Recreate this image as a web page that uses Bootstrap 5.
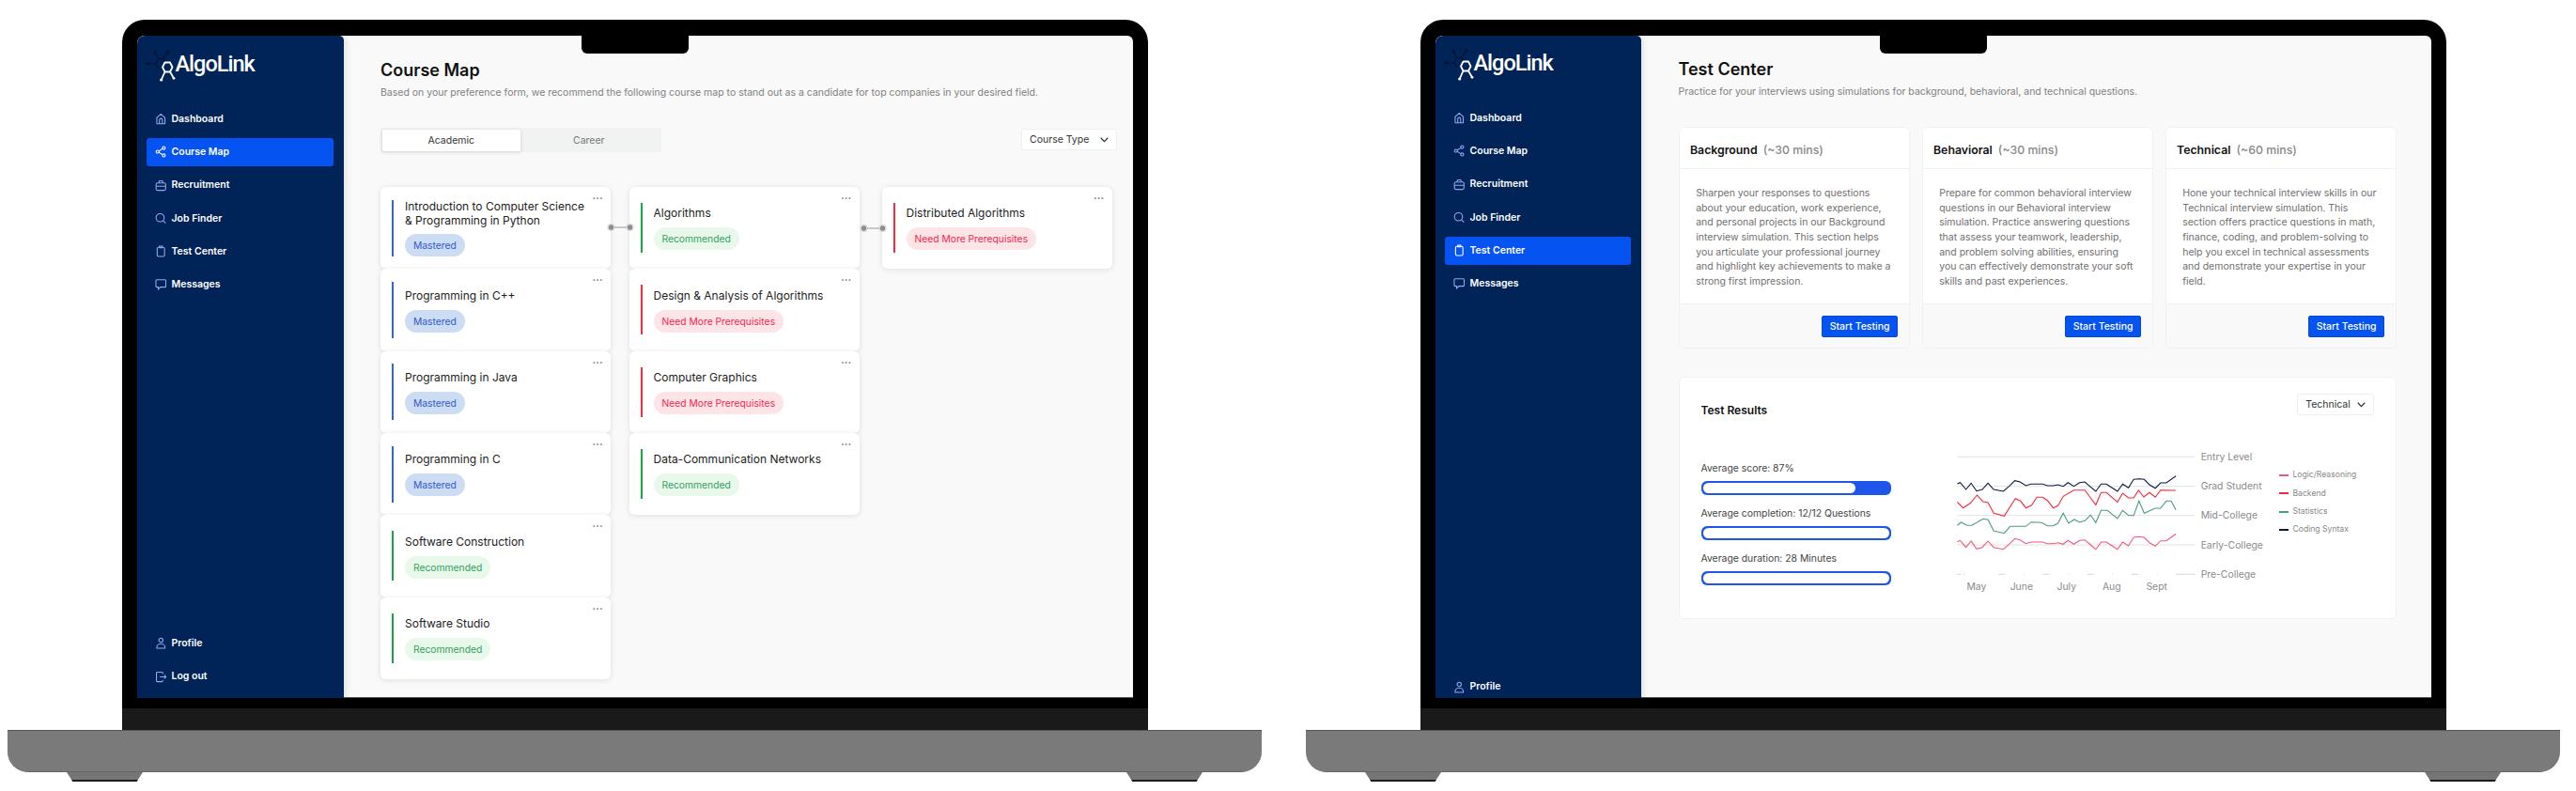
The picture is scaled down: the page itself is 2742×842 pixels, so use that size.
<!DOCTYPE html>
<html lang="en">

<head>
	<meta charset="utf-8">
	<meta name="viewport" content="width=device-width, initial-scale=1">
	<title>AlgoLink</title>
	<link href="https://cdn.jsdelivr.net/npm/bootstrap@5.3.5/dist/css/bootstrap.min.css" rel="stylesheet">
	<style>
		body { background: #fff; font-family: Inter, "Liberation Sans", sans-serif; overflow: hidden; width: 2742px; height: 842px; }
		.stage { padding: 21px 0 0 8px; gap: 47px; }
		.laptop { width: 1335px; flex: none; }
		.lid { width: 1092px; margin: 0 auto; position: relative; background: #000; border-radius: 24px 24px 0 0; padding: 17px 16px 11.5px; }
		.notch { position: absolute; left: 50%; top: 0; width: 114px; height: 36px; margin-left: -57px; background: #000; border-radius: 0 0 6px 6px; z-index: 3; }
		.chin { width: 1092px; height: 23px; margin: 0 auto; background: #1a1a1a; }
		.base { height: 45px; background: #7a7a7a; border-top: 1px solid #555; border-bottom: 1px solid #666; border-radius: 0 0 22px 22px; }
		.feet { padding: 0 63px; }
		.foot { width: 81px; height: 10px; background: #757575; border-bottom: 2px solid #1c1c1c; clip-path: polygon(0 0, 100% 0, 92% 100%, 8% 100%); }
		.screen { height: 704.5px; background: #f9f9f9; border-radius: 8px 6px 0 0; overflow: hidden; }

		.app-side { width: 220px; flex: none; background: #002358; padding: 14px 11px 7.5px 10px; border-radius: 8px 5px 0 0; box-shadow: 2px 0 6px rgba(0, 0, 0, .1); position: relative; }
		.app-side.cut { width: 219px; padding-top: 13px; padding-bottom: 0; margin-bottom: -3.5px; }
		.brand-row { height: 36px; margin-left: -1px; margin-bottom: 23.5px; color: #fff; }
		.brand-row svg { width: 34px; height: 36px; flex: none; margin-right: -2px; }
		.brand-name { font-family: Roboto, sans-serif; font-size: 23.5px; font-weight: 500; letter-spacing: -1px; margin-top: -3px; }
		.app-side .nav { gap: 5.3px; }
		.app-side .nav-link { height: 30px; padding: 0 0 0 9px; gap: 5.5px; color: #fff; font-size: 10.5px; font-weight: 600; border-radius: 3px; }
		.app-side .nav-link.active { background: #0553f0; color: #fff; }
		.app-side .nav-link svg { width: 12.5px; height: 13px; flex: none; stroke: #8fa8f0; fill: none; stroke-width: 1.4; }
		.app-side .nav-link.active svg { stroke: #fff; }

		.app-main { border-bottom: 1px solid #555; padding: 25px 16.5px 0 39.5px; min-width: 0; }
		.app-main.test { padding: 24px 37px 0 40px; }
		.page-title { font-size: 18px; line-height: 24px; font-weight: 600; color: #111; margin: 0 0 3.7px; }
		.page-sub { font-size: 10.5px; line-height: 16px; color: #808080; margin: 0; }

		.tab-track { width: 299px; height: 26.7px; margin-top: 29px; background: #f1f2f2; border-radius: 3px; padding: 2px; }
		.tab-track .nav-link { width: 146.5px; height: 23px; padding: 0; font-size: 10.5px; line-height: 23px; text-align: center; color: #777; border-radius: 2px; }
		.tab-track .nav-link.active { background: #fff; color: #333; box-shadow: 0 1px 4px rgba(0, 0, 0, .15); }
		.pick { background: #fff; border: 1px solid #efefef; border-radius: 3px; height: 23px; padding: 0 8px; font-size: 10.5px; color: #333; white-space: nowrap; }
		.pick svg { width: 9px; height: 6px; flex: none; fill: none; stroke: #333; stroke-width: 1.3; }
		.pick-type { margin: 30.7px 0 0; width: 102px; }
		.pick-level { width: 81.3px; }

		.board { margin-top: 36.5px; }
		.board-col { width: 245px; flex: none; }
		.board-col + .board-col { margin-left: 19.5px; }
		.board-col:last-child { margin-left: 24px; }
		.map-tile { height: 87.33px; padding: 0 20px 0 12px; gap: 12px; border: 0; border-radius: 6px; box-shadow: 0 1px 6px rgba(0, 0, 0, .11); }
		.map-stripe { width: 2px; height: 53px; flex: none; }
		.is-blue .map-stripe { height: 60px; background: #2f66e8; }
		.is-green .map-stripe { background: #18a544; }
		.is-red .map-stripe { background: #f22b3f; }
		.map-title { font-size: 12px; line-height: 14.3px; color: #222; padding-top: 1.5px; margin-bottom: 7.5px; }
		.map-tag { height: 24px; line-height: 24px; padding: 0 9px; border-radius: 12px; font-size: 10.3px; }
		.is-blue .map-tag { background: #cbdcf3; color: #3558c9; }
		.is-green .map-tag { background: #e8f8ea; color: #35a05f; }
		.is-red .map-tag { background: #fde4e7; color: #f5274f; }
		.map-dots { position: absolute; top: 6px; right: 8px; font-size: 11px; line-height: 13px; font-weight: 700; color: #777; letter-spacing: .2px; }
		.map-link { position: absolute; left: 100%; top: 38px; margin-left: -4px; width: 30px; height: 10px; z-index: 2; }
		.map-link.far { margin-left: 0; top: 38.7px; }

		.test-row { gap: 13px; margin-top: 29.7px; }
		.test-card { width: 246px; height: 235.7px; border-color: #f1f1f1; border-radius: 6px; }
		.test-card .card-header { height: 43.5px; padding: 0 11.5px; background: #fff; border-color: #f0f0f0; font-size: 12.3px; line-height: 47px; font-weight: 600; color: #111; }
		.test-card .card-header span { font-weight: 500; color: #888; margin-left: 3px; }
		.test-card .card-body { padding: 18px 15.3px 0 17.7px; font-size: 10.5px; line-height: 15.65px; color: #6f6f6f; }
		.test-card .card-footer { height: 46.7px; padding: 11.3px 11.5px 0; background: #f9f9f9; border-color: #f0f0f0; }
		.go-btn { width: 80.8px; height: 23.4px; padding: 0; font-size: 10.5px; font-weight: 500; line-height: 21px; background: #0553f0; border-color: #0a46cf; border-radius: 2px; }

		.result-card { height: 258px; margin-top: 30.3px; padding: 17px 23px 0; border-color: #f1f1f1; border-radius: 6px; }
		.result-title { font-size: 12px; line-height: 16px; font-weight: 600; color: #111; margin: 10px 0 0; }
		.result-body { margin-top: 34px; }
		.bars { width: 202px; flex: none; margin: 11.7px 70.5px 0 0; }
		.bar-label { font-size: 10.4px; line-height: 16px; color: #444; margin-bottom: 5.3px; }
		.bars .progress { height: 14.7px; padding: 2px; margin-bottom: 12px; background: #1f56ea; }
		.bars .progress-bar { border-radius: 6px; }
		.chart { width: 340px; height: 160px; flex: none; }
		.chart text { font-size: 10.4px; fill: #8a8a8a; }
		.legend { margin: 20px 0 0 3px; gap: 7.3px; font-size: 8.6px; line-height: 12px; color: #888; white-space: nowrap; }
		.legend i { display: inline-block; width: 9.5px; height: 2px; vertical-align: middle; margin-right: 5px; }
	</style>
</head>

<body>
	<svg class="d-none">
		<symbol id="i-home" viewBox="0 0 16 16"><path d="M2.5 14V6.5L8 1.5l5.5 5V14a.8.8 0 0 1-.8.8H3.3a.8.8 0 0 1-.8-.8zM6 14.8V9.5a2 2 0 0 1 4 0v5.3"/></symbol>
		<symbol id="i-map" viewBox="0 0 16 16"><circle cx="3.5" cy="8" r="2"/><circle cx="12" cy="3" r="2"/><circle cx="12" cy="13" r="2"/><path d="M5.3 7l5-3M5.3 9l5 3"/></symbol>
		<symbol id="i-case" viewBox="0 0 16 16"><rect x="1.5" y="4.5" width="13" height="10" rx="2"/><path d="M5.5 4.5v-2a1 1 0 0 1 1-1h3a1 1 0 0 1 1 1v2M1.5 9h13"/></symbol>
		<symbol id="i-search" viewBox="0 0 16 16"><circle cx="7" cy="7" r="5.5"/><path d="M11 11l3.5 3.5"/></symbol>
		<symbol id="i-clip" viewBox="0 0 16 16"><rect x="3" y="2.5" width="10" height="12.5" rx="2"/><path d="M6 1h4v2H6z"/></symbol>
		<symbol id="i-chat" viewBox="0 0 16 16"><path d="M2.5 2h11a1.3 1.3 0 0 1 1.3 1.3v7.4a1.3 1.3 0 0 1-1.3 1.3H7.5l-3 3v-3h-2a1.3 1.3 0 0 1-1.3-1.3V3.3A1.3 1.3 0 0 1 2.5 2z"/></symbol>
		<symbol id="i-user" viewBox="0 0 16 16"><circle cx="8" cy="4" r="2.8"/><path d="M2.5 15v-1.5a5.5 4.5 0 0 1 11 0V15z"/></symbol>
		<symbol id="i-out" viewBox="0 0 16 16"><path d="M10.5 4V2.5a1 1 0 0 0-1-1H3a1 1 0 0 0-1 1v11a1 1 0 0 0 1 1h6.5a1 1 0 0 0 1-1V12M6.5 8H15M12.5 5.5L15 8l-2.5 2.5"/></symbol>
		<symbol id="i-down" viewBox="0 0 9 6"><path d="M.8 .8L4.5 4.6 8.2 .8"/></symbol>
	</svg>

	<div class="stage d-flex">
		<!-- course map -->
		<div class="laptop">
			<div class="lid">
				<div class="notch"></div>
				<div class="screen d-flex">
					<aside class="app-side d-flex flex-column" data-active="Course Map" data-foot="Profile,Log out"></aside>
					<main class="app-main flex-grow-1">
						<h1 class="page-title">Course Map</h1>
						<p class="page-sub">Based on your preference form, we recommend the following course map to stand out as a candidate for top companies in your desired field.</p>
						<div class="d-flex justify-content-between align-items-start">
							<ul class="nav tab-track">
								<li class="nav-item"><a class="nav-link active" href="#">Academic</a></li>
								<li class="nav-item"><a class="nav-link" href="#">Career</a></li>
							</ul>
							<button class="pick pick-type d-flex align-items-center justify-content-between" type="button">Course Type <svg><use href="#i-down"/></svg></button>
						</div>
						<div id="board" class="board d-flex align-items-start"></div>
					</main>
				</div>
			</div>
			<div class="chin"></div>
			<div class="base"></div>
			<div class="feet d-flex justify-content-between"><div class="foot"></div><div class="foot"></div></div>
		</div>

		<!-- test center -->
		<div class="laptop">
			<div class="lid">
				<div class="notch"></div>
				<div class="screen d-flex">
					<aside class="app-side cut d-flex flex-column" data-active="Test Center" data-foot="Profile"></aside>
					<main class="app-main test flex-grow-1">
						<h1 class="page-title">Test Center</h1>
						<p class="page-sub">Practice for your interviews using simulations for background, behavioral, and technical questions.</p>
						<div id="tests" class="test-row d-flex"></div>
						<div class="card result-card">
							<div class="d-flex justify-content-between align-items-start">
								<h2 class="result-title">Test Results</h2>
								<button class="pick pick-level d-flex align-items-center justify-content-between" type="button">Technical <svg><use href="#i-down"/></svg></button>
							</div>
							<div class="result-body d-flex align-items-start">
								<div class="bars">
									<div class="bar-label">Average score: 87%</div>
									<div class="progress"><div class="progress-bar bg-white" style="width: 82%"></div></div>
									<div class="bar-label">Average completion: 12/12 Questions</div>
									<div class="progress"><div class="progress-bar bg-white" style="width: 100%"></div></div>
									<div class="bar-label">Average duration: 28 Minutes</div>
									<div class="progress"><div class="progress-bar bg-white" style="width: 100%"></div></div>
								</div>
								<svg id="chart" class="chart"></svg>
								<div class="legend d-flex flex-column">
									<div><i style="background: #f4577a"></i>Logic/Reasoning</div>
									<div><i style="background: #f32a3c"></i>Backend</div>
									<div><i style="background: #4d9b82"></i>Statistics</div>
									<div><i style="background: #0b1b3f"></i>Coding Syntax</div>
								</div>
							</div>
						</div>
					</main>
				</div>
			</div>
			<div class="chin"></div>
			<div class="base"></div>
			<div class="feet d-flex justify-content-between"><div class="foot"></div><div class="foot"></div></div>
		</div>
	</div>

	<script src="https://cdn.jsdelivr.net/npm/bootstrap@5.3.5/dist/js/bootstrap.bundle.min.js"></script>
	<script>
		const navIcons = {
			'Dashboard': 'home', 'Course Map': 'map', 'Recruitment': 'case', 'Job Finder': 'search',
			'Test Center': 'clip', 'Messages': 'chat', 'Profile': 'user', 'Log out': 'out'
		};
		const navLink = (name, active) => `
			<a class="nav-link d-flex align-items-center ${name === active ? 'active' : ''}" href="#">
				<svg><use href="#i-${navIcons[name]}"/></svg>${name}
			</a>`;
		const logo = `
			<svg viewBox="0 0 34 36" fill="none" stroke-linecap="round">
				<g stroke="#0a1330" stroke-width="1.2" fill="#0a1330">
					<path d="M10 4l3.5 6.5h5L23.7 3M2.3 16h9M13.5 10.5L11 16l3 5M18.5 10.5L21 14" fill="none"/>
					<circle cx="10" cy="4" r="1.2"/><circle cx="23.7" cy="3" r="1.2"/><circle cx="2.3" cy="16" r="1.2"/>
				</g>
				<g stroke="#fff" stroke-width="1.8">
					<path d="M20.5 14.5h5.5l2.5 5-2.5 5h-5.5l-2.5-5zM20.5 24.5L16.7 33M26 24.5l4 6.8" stroke-linejoin="round"/>
				</g>
				<circle cx="16.7" cy="33" r="1.6" fill="#fff"/><circle cx="30" cy="31.3" r="1.4" fill="#fff"/>
			</svg>`;

		document.querySelectorAll('.app-side').forEach(side => {
			const active = side.dataset.active;
			const main = ['Dashboard', 'Course Map', 'Recruitment', 'Job Finder', 'Test Center', 'Messages'];
			side.innerHTML = `
				<div class="brand-row d-flex align-items-center">${logo}<span class="brand-name">AlgoLink</span></div>
				<nav class="nav flex-column">${main.map(n => navLink(n, active)).join('')}</nav>
				<nav class="nav flex-column mt-auto">${side.dataset.foot.split(',').map(n => navLink(n, active)).join('')}</nav>`;
		});

		const tags = {blue: 'Mastered', green: 'Recommended', red: 'Need More Prerequisites'};
		const columns = [
			[['Introduction to Computer Science & Programming in Python', 'blue', 'near'], ['Programming in C++', 'blue'], ['Programming in Java', 'blue'], ['Programming in C', 'blue'], ['Software Construction', 'green'], ['Software Studio', 'green']],
			[['Algorithms', 'green', 'far'], ['Design & Analysis of Algorithms', 'red'], ['Computer Graphics', 'red'], ['Data-Communication Networks', 'green']],
			[['Distributed Algorithms', 'red']]
		];
		const linkSvg = kind => `
			<svg class="map-link ${kind}" viewBox="0 0 30 10">
				<circle cx="4.5" cy="5" r="3.4" fill="#8d8d8d" stroke="#dcdcdc" stroke-width="1.4"/>
				<circle cx="24.5" cy="5" r="3.4" fill="#8d8d8d" stroke="#dcdcdc" stroke-width="1.4"/>
				<path d="M8 5h13" stroke="#9a9a9a"/>
			</svg>`;
		document.getElementById('board').innerHTML = columns.map(col => `
			<div class="board-col">${col.map(([title, tone, link]) => `
				<div class="card map-tile is-${tone} flex-row align-items-center">
					<div class="map-stripe"></div>
					<div class="d-flex flex-column align-items-start">
						<div class="map-title">${title.replace('&', '&amp;')}</div>
						<span class="map-tag">${tags[tone]}</span>
					</div>
					<span class="map-dots">···</span>
					${link ? linkSvg(link) : ''}
				</div>`).join('')}
			</div>`).join('');

		const tests = [
			['Background', '~30', 'Sharpen your responses to questions about your education, work experience, and personal projects in our Background interview simulation. This section helps you articulate your professional journey and highlight key achievements to make a strong first impression.'],
			['Behavioral', '~30', 'Prepare for common behavioral interview questions in our Behavioral interview simulation. Practice answering questions that assess your teamwork, leadership, and problem solving abilities, ensuring you can effectively demonstrate your soft skills and past experiences.'],
			['Technical', '~60', 'Hone your technical interview skills in our Technical interview simulation. This section offers practice questions in math, finance, coding, and problem-solving to help you excel in technical assessments and demonstrate your expertise in your field.']
		];
		document.getElementById('tests').innerHTML = tests.map(([name, mins, text]) => `
			<div class="card test-card">
				<div class="card-header">${name} <span>(${mins} mins)</span></div>
				<div class="card-body">${text}</div>
				<div class="card-footer d-flex justify-content-end align-items-start"><button class="btn btn-primary go-btn" type="button">Start Testing</button></div>
			</div>`).join('');

		// chart points were read off the picture, px() takes them to svg space
		const px = ([x, y]) => `${(x / 1.96 - 322).toFixed(1)},${(y / 3 - 88).toFixed(1)}`;
		const coding = [[632,372],[638,368],[650,390],[661,370],[672,395],[684,390],[696,370],[708,390],[728,396],[740,380],[752,362],[763,366],[775,378],[786,373],[810,373],[820,378],[832,378],[842,375],[853,380],[863,368],[875,380],[887,368],[898,366],[910,382],[921,396],[932,373],[943,373],[955,385],[966,396],[977,373],[989,385],[1000,358],[1012,356],[1022,358],[1033,375],[1045,386],[1056,369],[1068,369],[1088,347]];
		const backend = [[632,430],[644,449],[660,433],[673,408],[685,428],[696,432],[708,466],[730,475],[753,419],[764,427],[775,449],[787,440],[798,415],[810,415],[820,425],[832,449],[842,442],[853,412],[875,392],[898,392],[910,417],[921,439],[932,400],[943,400],[966,430],[977,402],[989,417],[1000,417],[1010,393],[1021,414],[1033,400],[1045,415],[1056,392],[1088,393]];
		const stats = [[632,505],[640,495],[652,505],[662,505],[686,484],[696,487],[708,522],[730,530],[742,508],[775,508],[786,494],[808,496],[820,506],[832,506],[842,498],[853,466],[864,498],[876,486],[887,495],[898,490],[910,472],[921,496],[932,457],[945,457],[966,483],[977,457],[989,473],[1000,473],[1011,427],[1022,466],[1045,450],[1056,450],[1068,427],[1078,427],[1088,455]];
		const logic = coding.map(([x, y]) => [x, y + 185]);

		const levels = [['Entry Level', 286], ['Grad Student', 380], ['Mid-College', 473], ['Early-College', 567]];
		const dashes = [[632,640],[645,648],[718,732],[770,772],[810,825],[863,865],[903,917],[955,957],[995,1010],[1048,1050],[1088,1128]];
		const months = [['May', 672], ['June', 766], ['July', 860], ['Aug', 954], ['Sept', 1048]];
		const line = (pts, color) => `<polyline points="${pts.map(px).join(' ')}" fill="none" stroke="${color}" stroke-width="1.1"/>`;

		document.getElementById('chart').innerHTML = `
			${levels.map(([label, y]) => `
				<polyline points="${px([632, y])} ${px([1128, y])}" stroke="#e2e2e2" stroke-width="1" fill="none"/>
				<text x="${1140 / 1.96 - 322}" y="${y / 3 - 88}" dominant-baseline="central">${label}</text>`).join('')}
			${dashes.map(([a, b]) => `<polyline points="${px([a, 661])} ${px([b, 661])}" stroke="#d8d8d8" fill="none"/>`).join('')}
			<text x="${1140 / 1.96 - 322}" y="${662 / 3 - 88}" dominant-baseline="central">Pre-College</text>
			${months.map(([label, x]) => `<text x="${x / 1.96 - 322}" y="${700 / 3 - 88}" text-anchor="middle" dominant-baseline="central">${label}</text>`).join('')}
			${line(logic, '#f4577a')}${line(stats, '#4d9b82')}${line(backend, '#f32a3c')}${line(coding, '#0b1b3f')}`;
	</script>
</body>

</html>
